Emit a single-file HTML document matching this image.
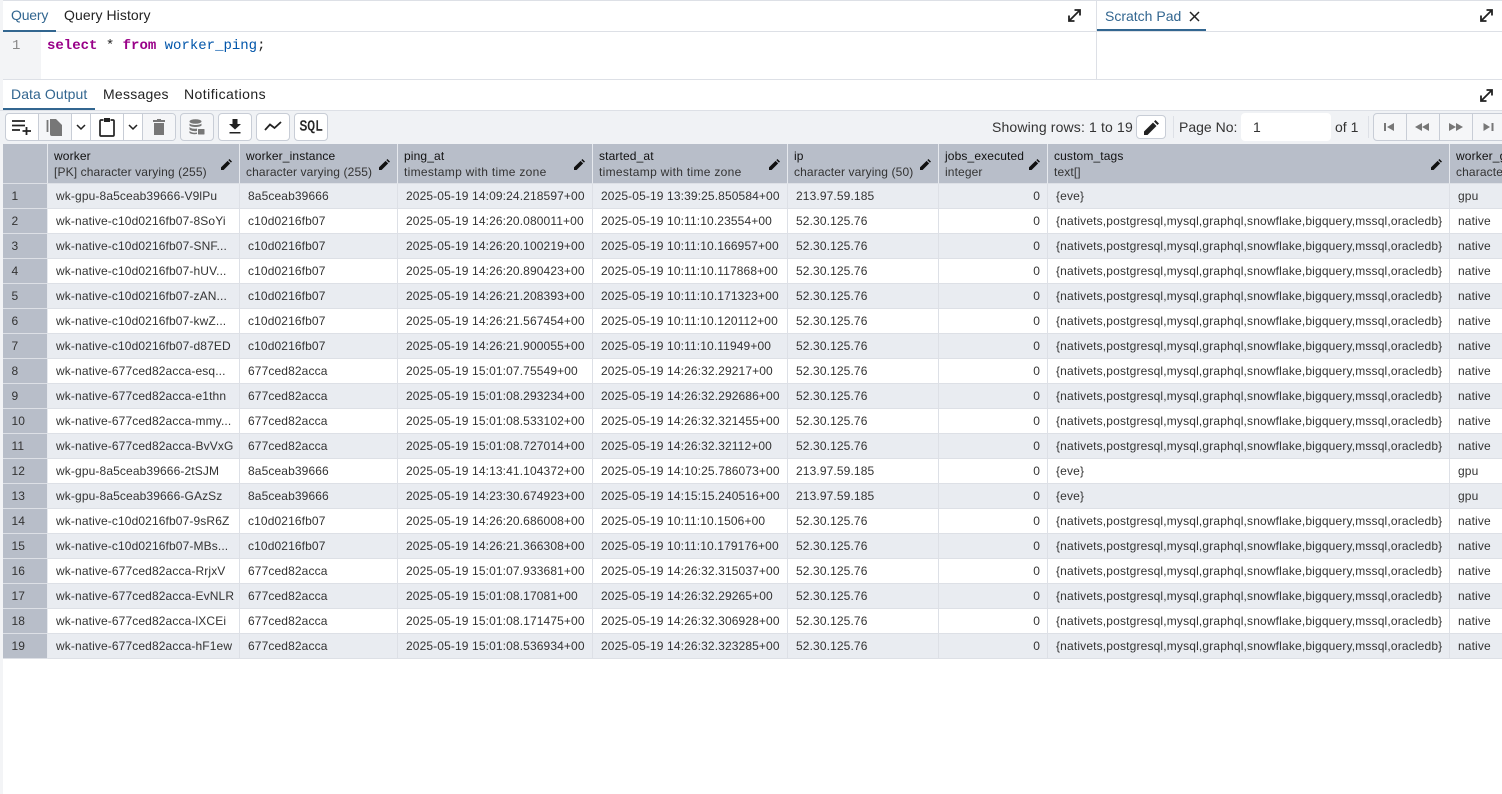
<!DOCTYPE html>
<html><head><meta charset="utf-8"><style>
*{box-sizing:border-box}
html,body{margin:0;padding:0;width:1502px;height:794px;overflow:hidden;background:#fff;font-family:"Liberation Sans",sans-serif;color:#222}
.a{position:absolute;white-space:nowrap}
.ln{position:absolute;background:#dde0e6}
.t{font-size:14px;line-height:16px;color:#222}
.act{color:#326690}
.btn{position:absolute;top:113px;height:28px;background:#fff;border:1px solid #c8cdd6;border-radius:4px}
table{position:absolute;left:3px;top:144px;border-collapse:separate;border-spacing:0;table-layout:fixed;width:1520px}
th{background:#b8bec9;height:40px;text-align:left;font-weight:normal;padding:4px 0 0 6px;border-right:1px solid #e6e9ee;border-bottom:1px solid #dde0e6;font-size:12px;line-height:16px;vertical-align:top;white-space:nowrap;overflow:hidden;position:relative;color:#333;letter-spacing:.12px}
th.ts{letter-spacing:.3px}
th b{font-weight:normal;color:#111;display:block;letter-spacing:.13px}
th svg{position:absolute;right:7px;top:15px}
td{height:25px;padding:0 0 0 8px;font-size:12px;color:#333;border-right:1px solid #dde0e6;border-bottom:1px solid #dde0e6;white-space:nowrap;overflow:hidden;background:#fff;letter-spacing:.12px}
td:nth-child(8){letter-spacing:.16px}
tr:nth-child(odd) td{background:#e9ecf1}
td:first-child,tr:nth-child(odd) td:first-child{background:#b8bec9;padding-left:8.5px;border-right:1px solid #e6e9ee;border-bottom:1px solid #dde0e6;letter-spacing:.1px}
td.r{text-align:right;padding:0 7px 0 0}
</style></head><body>
<div class="ln" style="left:0;top:0;width:1502px;height:1px"></div>
<div class="ln" style="left:3px;top:31px;width:1499px;height:1px"></div>
<div class="ln" style="left:3px;top:79px;width:1499px;height:1px"></div>
<div class="ln" style="left:1096px;top:0;width:1px;height:79px"></div>
<div class="a" style="left:0;top:0;width:3px;height:794px;background:#f3f4f6"></div>
<div class="a t act" style="left:11px;top:7px;letter-spacing:-.2px">Query</div>
<div class="a" style="left:3px;top:30px;width:53px;height:2px;background:#326690"></div>
<div class="a t" style="left:64px;top:7px;letter-spacing:.08px">Query History</div>
<svg class="a" style="left:1066px;top:7px" width="17" height="17" viewBox="0 0 17 17"><path d="M3 14L14 3M8.5 3H14V8.5M3 8.5V14H8.5" fill="none" stroke="#222" stroke-width="1.8"/></svg>
<div class="a t act" style="left:1105px;top:8px;">Scratch Pad</div>
<svg class="a" style="left:1189px;top:11px" width="11" height="11" viewBox="0 0 11 11"><path d="M1 1L10 10M10 1L1 10" stroke="#222" stroke-width="1.5"/></svg>
<div class="a" style="left:1097px;top:29px;width:109px;height:2px;background:#326690"></div>
<svg class="a" style="left:1478px;top:7px" width="17" height="17" viewBox="0 0 17 17"><path d="M3 14L14 3M8.5 3H14V8.5M3 8.5V14H8.5" fill="none" stroke="#222" stroke-width="1.8"/></svg>
<div class="a" style="left:3px;top:32px;width:38px;height:47px;background:#f3f4f6"></div>
<div class="a" style="left:12px;top:38px;font:14px/16px 'Liberation Mono',monospace;color:#888">1</div>
<div class="a" style="left:47px;top:38px;font:14px/16px 'Liberation Mono',monospace;color:#222"><span style="color:#908;font-weight:bold">select</span> * <span style="color:#908;font-weight:bold">from</span> <span style="color:#05a">worker_ping</span>;</div>
<div class="a t act" style="left:11px;top:86px;letter-spacing:.08px">Data Output</div>
<div class="a" style="left:3px;top:108px;width:92px;height:2px;background:#326690"></div>
<div class="a t" style="left:103px;top:86px;letter-spacing:.25px">Messages</div>
<div class="a t" style="left:184px;top:86px;letter-spacing:.45px">Notifications</div>
<svg class="a" style="left:1478px;top:87px" width="17" height="17" viewBox="0 0 17 17"><path d="M3 14L14 3M8.5 3H14V8.5M3 8.5V14H8.5" fill="none" stroke="#222" stroke-width="1.8"/></svg>
<div class="a" style="left:0;top:110px;width:1502px;height:34px;background:#f0f2f5;border-top:1px solid #dde0e6"></div>
<div class="btn" style="left:5px;width:171px"></div>
<div class="ln" style="left:38px;top:114px;width:1px;height:26px;background:#c8cdd6"></div>
<div class="ln" style="left:71px;top:114px;width:1px;height:26px;background:#c8cdd6"></div>
<div class="ln" style="left:90px;top:114px;width:1px;height:26px;background:#c8cdd6"></div>
<div class="ln" style="left:123px;top:114px;width:1px;height:26px;background:#c8cdd6"></div>
<div class="ln" style="left:142px;top:114px;width:1px;height:26px;background:#c8cdd6"></div>
<div class="a" style="left:39px;top:114px;width:32px;height:26px;background:#f5f6f8"></div>
<div class="a" style="left:143px;top:114px;width:32px;height:26px;background:#f5f6f8;border-radius:0 3px 3px 0"></div>
<svg class="a" style="left:11px;top:118px" width="22" height="18" viewBox="0 0 22 18"><path d="M1 3H14M1 7.500H14M1 12H9M15.500 9V17M11.500 13H20" fill="none" stroke="#222" stroke-width="1.800"/></svg>
<svg class="a" style="left:46px;top:118px" width="18" height="19" viewBox="0 0 18 19"><path d="M1.500 2V14" stroke="#777" stroke-width="1.800" fill="none"/><path d="M4 1H10L16 7V18H6A2 2 0 0 1 4 16Z" fill="#777"/></svg>
<svg class="a" style="left:76px;top:123px" width="10" height="8" viewBox="0 0 10 8"><path d="M1 2L5 6L9 2" fill="none" stroke="#222" stroke-width="1.500"/></svg>
<svg class="a" style="left:99px;top:117px" width="16" height="20" viewBox="0 0 16 20"><path d="M4.500 3H2A1 1 0 0 0 1 4V18A1 1 0 0 0 2 19H14A1 1 0 0 0 15 18V4A1 1 0 0 0 14 3H11.500" fill="none" stroke="#222" stroke-width="1.700"/><rect x="5" y="1" width="6" height="4" fill="#222"/></svg>
<svg class="a" style="left:128px;top:123px" width="10" height="8" viewBox="0 0 10 8"><path d="M1 2L5 6L9 2" fill="none" stroke="#222" stroke-width="1.500"/></svg>
<svg class="a" style="left:153px;top:119px" width="12" height="16" viewBox="0 0 12 16"><path d="M4 0H8V1H12V3H0V1H4ZM1 4H11V16H1Z" fill="#777"/></svg>
<div class="btn" style="left:180px;width:34px;background:#f5f6f8"></div>
<svg class="a" style="left:189px;top:119px" width="16" height="16" viewBox="0 0 16 16"><ellipse cx="6.500" cy="2.500" rx="6" ry="2.300" fill="#777"/><path d="M.5 4.500C2 6.500 11 6.500 12.500 4.500V6.500C11 8.500 2 8.500 .5 6.500ZM.5 8C2 10 7 10 8 9.500V12C6 12.500 2 12 .5 10.500ZM.5 12C2 13.500 5 14 8 13.500V15C5 15.500 2 15 .5 14Z" fill="#777"/><rect x="9" y="10" width="6.500" height="5.500" rx=".5" fill="#777"/></svg>
<div class="btn" style="left:218px;width:34px"></div>
<svg class="a" style="left:228px;top:119px" width="14" height="15" viewBox="0 0 14 15"><path d="M4.500 0H9.500V5H13L7 10.500L1 5H4.500ZM1.500 13H12.500V14.500H1.500Z" fill="#222"/></svg>
<div class="btn" style="left:256px;width:34px"></div>
<svg class="a" style="left:264px;top:120px" width="18" height="12" viewBox="0 0 18 12"><path d="M1 10L6 4.500L10.500 8L17 2" fill="none" stroke="#222" stroke-width="1.800"/></svg>
<div class="btn" style="left:294px;width:34px"></div>
<div class="a" style="left:299.500px;top:119px;font:13px/16px 'Liberation Mono',monospace;color:#222;-webkit-text-stroke:.4px #222;transform:scaleY(1.150)">SQL</div>
<div class="a" style="left:992px;top:119px;font-size:14px;line-height:16px;color:#333;letter-spacing:.15px">Showing rows: 1 to 19</div>
<div class="btn" style="left:1136px;width:30px;top:115px;height:24px"></div>
<svg class="a" style="left:1144px;top:120px" width="15" height="15" viewBox="0 0 15 15"><path d="M0 15V11.500L9 2.500L12.500 6L3.500 15ZM10 1.500L11.500 0L15 3.500L13.500 5Z" fill="#222"/></svg>
<div class="ln" style="left:1173px;top:116px;width:1px;height:22px"></div>
<div class="a" style="left:1179px;top:119px;font-size:14px;line-height:16px;color:#333">Page No:</div>
<div class="a" style="left:1241px;top:113px;width:90px;height:28px;background:#fff;border-radius:4px;font-size:14px;line-height:28px;padding-left:12px;color:#333">1</div>
<div class="a" style="left:1335px;top:119px;font-size:14px;line-height:16px;color:#333">of 1</div>
<div class="ln" style="left:1368px;top:116px;width:1px;height:22px"></div>
<div class="btn" style="left:1373px;width:140px;background:#f5f6f8"></div>
<div class="ln" style="left:1406px;top:114px;width:1px;height:26px;background:#c8cdd6"></div>
<div class="ln" style="left:1439px;top:114px;width:1px;height:26px;background:#c8cdd6"></div>
<div class="ln" style="left:1472px;top:114px;width:1px;height:26px;background:#c8cdd6"></div>
<svg class="a" style="left:1373px;top:120px" width="129" height="14" viewBox="0 0 129 14" fill="#777"><path d="M11 3H13V11H11ZM14 7L21 3V11ZM42 7L49 3V11ZM49 7L56 3V11ZM76 3L83 7L76 11ZM83 3L90 7L83 11ZM110.500 3L117 7L110.500 11ZM118.500 3H120.500V11H118.500Z"/></svg>
<table><colgroup><col style="width:45px"><col style="width:192px"><col style="width:158px"><col style="width:195px"><col style="width:195px"><col style="width:151px"><col style="width:109px"><col style="width:402px"><col style="width:73px"></colgroup>
<thead><tr><th></th>
<th><b>worker</b>[PK] character varying (255)<svg width="11" height="11" viewBox="0 0 15 15"><path d="M0 15V11.500L9 2.500L12.500 6L3.500 15ZM10 1.500L11.500 0L15 3.500L13.500 5Z" fill="#111"/></svg></th>
<th><b>worker_instance</b>character varying (255)<svg width="11" height="11" viewBox="0 0 15 15"><path d="M0 15V11.500L9 2.500L12.500 6L3.500 15ZM10 1.500L11.500 0L15 3.500L13.500 5Z" fill="#111"/></svg></th>
<th class="ts"><b>ping_at</b>timestamp with time zone<svg width="11" height="11" viewBox="0 0 15 15"><path d="M0 15V11.500L9 2.500L12.500 6L3.500 15ZM10 1.500L11.500 0L15 3.500L13.500 5Z" fill="#111"/></svg></th>
<th class="ts"><b>started_at</b>timestamp with time zone<svg width="11" height="11" viewBox="0 0 15 15"><path d="M0 15V11.500L9 2.500L12.500 6L3.500 15ZM10 1.500L11.500 0L15 3.500L13.500 5Z" fill="#111"/></svg></th>
<th><b>ip</b>character varying (50)<svg width="11" height="11" viewBox="0 0 15 15"><path d="M0 15V11.500L9 2.500L12.500 6L3.500 15ZM10 1.500L11.500 0L15 3.500L13.500 5Z" fill="#111"/></svg></th>
<th><b>jobs_executed</b>integer<svg width="11" height="11" viewBox="0 0 15 15"><path d="M0 15V11.500L9 2.500L12.500 6L3.500 15ZM10 1.500L11.500 0L15 3.500L13.500 5Z" fill="#111"/></svg></th>
<th><b>custom_tags</b>text[]<svg width="11" height="11" viewBox="0 0 15 15"><path d="M0 15V11.500L9 2.500L12.500 6L3.500 15ZM10 1.500L11.500 0L15 3.500L13.500 5Z" fill="#111"/></svg></th>
<th><b>worker_group</b>character varying</th></tr></thead>
<tbody>
<tr><td>1</td><td>wk-gpu-8a5ceab39666-V9lPu</td><td>8a5ceab39666</td><td>2025-05-19 14:09:24.218597+00</td><td>2025-05-19 13:39:25.850584+00</td><td>213.97.59.185</td><td class="r">0</td><td>{eve}</td><td>gpu</td></tr>
<tr><td>2</td><td>wk-native-c10d0216fb07-8SoYi</td><td>c10d0216fb07</td><td>2025-05-19 14:26:20.080011+00</td><td>2025-05-19 10:11:10.23554+00</td><td>52.30.125.76</td><td class="r">0</td><td>{nativets,postgresql,mysql,graphql,snowflake,bigquery,mssql,oracledb}</td><td>native</td></tr>
<tr><td>3</td><td>wk-native-c10d0216fb07-SNF...</td><td>c10d0216fb07</td><td>2025-05-19 14:26:20.100219+00</td><td>2025-05-19 10:11:10.166957+00</td><td>52.30.125.76</td><td class="r">0</td><td>{nativets,postgresql,mysql,graphql,snowflake,bigquery,mssql,oracledb}</td><td>native</td></tr>
<tr><td>4</td><td>wk-native-c10d0216fb07-hUV...</td><td>c10d0216fb07</td><td>2025-05-19 14:26:20.890423+00</td><td>2025-05-19 10:11:10.117868+00</td><td>52.30.125.76</td><td class="r">0</td><td>{nativets,postgresql,mysql,graphql,snowflake,bigquery,mssql,oracledb}</td><td>native</td></tr>
<tr><td>5</td><td>wk-native-c10d0216fb07-zAN...</td><td>c10d0216fb07</td><td>2025-05-19 14:26:21.208393+00</td><td>2025-05-19 10:11:10.171323+00</td><td>52.30.125.76</td><td class="r">0</td><td>{nativets,postgresql,mysql,graphql,snowflake,bigquery,mssql,oracledb}</td><td>native</td></tr>
<tr><td>6</td><td>wk-native-c10d0216fb07-kwZ...</td><td>c10d0216fb07</td><td>2025-05-19 14:26:21.567454+00</td><td>2025-05-19 10:11:10.120112+00</td><td>52.30.125.76</td><td class="r">0</td><td>{nativets,postgresql,mysql,graphql,snowflake,bigquery,mssql,oracledb}</td><td>native</td></tr>
<tr><td>7</td><td>wk-native-c10d0216fb07-d87ED</td><td>c10d0216fb07</td><td>2025-05-19 14:26:21.900055+00</td><td>2025-05-19 10:11:10.11949+00</td><td>52.30.125.76</td><td class="r">0</td><td>{nativets,postgresql,mysql,graphql,snowflake,bigquery,mssql,oracledb}</td><td>native</td></tr>
<tr><td>8</td><td>wk-native-677ced82acca-esq...</td><td>677ced82acca</td><td>2025-05-19 15:01:07.75549+00</td><td>2025-05-19 14:26:32.29217+00</td><td>52.30.125.76</td><td class="r">0</td><td>{nativets,postgresql,mysql,graphql,snowflake,bigquery,mssql,oracledb}</td><td>native</td></tr>
<tr><td>9</td><td>wk-native-677ced82acca-e1thn</td><td>677ced82acca</td><td>2025-05-19 15:01:08.293234+00</td><td>2025-05-19 14:26:32.292686+00</td><td>52.30.125.76</td><td class="r">0</td><td>{nativets,postgresql,mysql,graphql,snowflake,bigquery,mssql,oracledb}</td><td>native</td></tr>
<tr><td>10</td><td>wk-native-677ced82acca-mmy...</td><td>677ced82acca</td><td>2025-05-19 15:01:08.533102+00</td><td>2025-05-19 14:26:32.321455+00</td><td>52.30.125.76</td><td class="r">0</td><td>{nativets,postgresql,mysql,graphql,snowflake,bigquery,mssql,oracledb}</td><td>native</td></tr>
<tr><td>11</td><td>wk-native-677ced82acca-BvVxG</td><td>677ced82acca</td><td>2025-05-19 15:01:08.727014+00</td><td>2025-05-19 14:26:32.32112+00</td><td>52.30.125.76</td><td class="r">0</td><td>{nativets,postgresql,mysql,graphql,snowflake,bigquery,mssql,oracledb}</td><td>native</td></tr>
<tr><td>12</td><td>wk-gpu-8a5ceab39666-2tSJM</td><td>8a5ceab39666</td><td>2025-05-19 14:13:41.104372+00</td><td>2025-05-19 14:10:25.786073+00</td><td>213.97.59.185</td><td class="r">0</td><td>{eve}</td><td>gpu</td></tr>
<tr><td>13</td><td>wk-gpu-8a5ceab39666-GAzSz</td><td>8a5ceab39666</td><td>2025-05-19 14:23:30.674923+00</td><td>2025-05-19 14:15:15.240516+00</td><td>213.97.59.185</td><td class="r">0</td><td>{eve}</td><td>gpu</td></tr>
<tr><td>14</td><td>wk-native-c10d0216fb07-9sR6Z</td><td>c10d0216fb07</td><td>2025-05-19 14:26:20.686008+00</td><td>2025-05-19 10:11:10.1506+00</td><td>52.30.125.76</td><td class="r">0</td><td>{nativets,postgresql,mysql,graphql,snowflake,bigquery,mssql,oracledb}</td><td>native</td></tr>
<tr><td>15</td><td>wk-native-c10d0216fb07-MBs...</td><td>c10d0216fb07</td><td>2025-05-19 14:26:21.366308+00</td><td>2025-05-19 10:11:10.179176+00</td><td>52.30.125.76</td><td class="r">0</td><td>{nativets,postgresql,mysql,graphql,snowflake,bigquery,mssql,oracledb}</td><td>native</td></tr>
<tr><td>16</td><td>wk-native-677ced82acca-RrjxV</td><td>677ced82acca</td><td>2025-05-19 15:01:07.933681+00</td><td>2025-05-19 14:26:32.315037+00</td><td>52.30.125.76</td><td class="r">0</td><td>{nativets,postgresql,mysql,graphql,snowflake,bigquery,mssql,oracledb}</td><td>native</td></tr>
<tr><td>17</td><td>wk-native-677ced82acca-EvNLR</td><td>677ced82acca</td><td>2025-05-19 15:01:08.17081+00</td><td>2025-05-19 14:26:32.29265+00</td><td>52.30.125.76</td><td class="r">0</td><td>{nativets,postgresql,mysql,graphql,snowflake,bigquery,mssql,oracledb}</td><td>native</td></tr>
<tr><td>18</td><td>wk-native-677ced82acca-lXCEi</td><td>677ced82acca</td><td>2025-05-19 15:01:08.171475+00</td><td>2025-05-19 14:26:32.306928+00</td><td>52.30.125.76</td><td class="r">0</td><td>{nativets,postgresql,mysql,graphql,snowflake,bigquery,mssql,oracledb}</td><td>native</td></tr>
<tr><td>19</td><td>wk-native-677ced82acca-hF1ew</td><td>677ced82acca</td><td>2025-05-19 15:01:08.536934+00</td><td>2025-05-19 14:26:32.323285+00</td><td>52.30.125.76</td><td class="r">0</td><td>{nativets,postgresql,mysql,graphql,snowflake,bigquery,mssql,oracledb}</td><td>native</td></tr>
</tbody></table>
</body></html>
